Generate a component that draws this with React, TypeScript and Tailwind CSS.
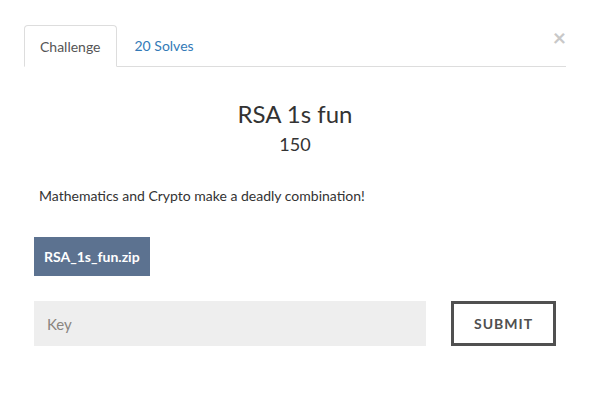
import * as React from 'react';

export default function App() {
  return (
    <div
      className="w-[590px] h-[404px] bg-white pt-[25px] px-[24px] text-[#333]"
      style={{ fontFamily: 'Lato, "Open Sans", sans-serif' }}
    >
      {/* tabs */}
      <div className="relative flex border-b border-[#ddd]">
        <div className="-mb-px h-[42px] px-[15px] flex items-center border border-[#ddd] border-b-white rounded-t-[4px] bg-white text-[14px] text-[#555]">
          Challenge
        </div>
        <div className="ml-[2px] h-[41px] px-[16px] flex items-center text-[14px] text-[#337ab7]">
          20 Solves
        </div>
        <button className="absolute right-[0px] top-[1px] text-[23px] leading-none font-bold text-[#c8c8c8]">
          ×
        </button>
      </div>

      {/* heading */}
      <div className="flex flex-col items-center pt-[32px]">
        <h3 className="text-[24px] leading-[30px]">RSA 1s fun</h3>
        <h4 className="mt-[4px] text-[18px] leading-[22px]">150</h4>
      </div>

      <p className="mt-[31px] ml-[15px] text-[14px] leading-[20px]">
        Mathematics and Crypto make a deadly combination!
      </p>

      <div className="mt-[31px] ml-[10px] flex">
        <a className="flex items-center h-[39px] px-[10px] bg-[#5c7290] text-white text-[14px] font-bold">
          RSA_1s_fun.zip
        </a>
      </div>

      <div className="mt-[25px] ml-[10px] flex">
        <input
          className="w-[392px] h-[45px] bg-[#eee] px-[13px] text-[15px] placeholder:text-[#8a8580] outline-none"
          placeholder="Key"
        />
        <button className="ml-[25px] w-[105px] h-[45px] border-[3px] border-[#505050] text-[14px] font-bold tracking-[1px] text-[#505050]">
          SUBMIT
        </button>
      </div>
    </div>
  );
}
